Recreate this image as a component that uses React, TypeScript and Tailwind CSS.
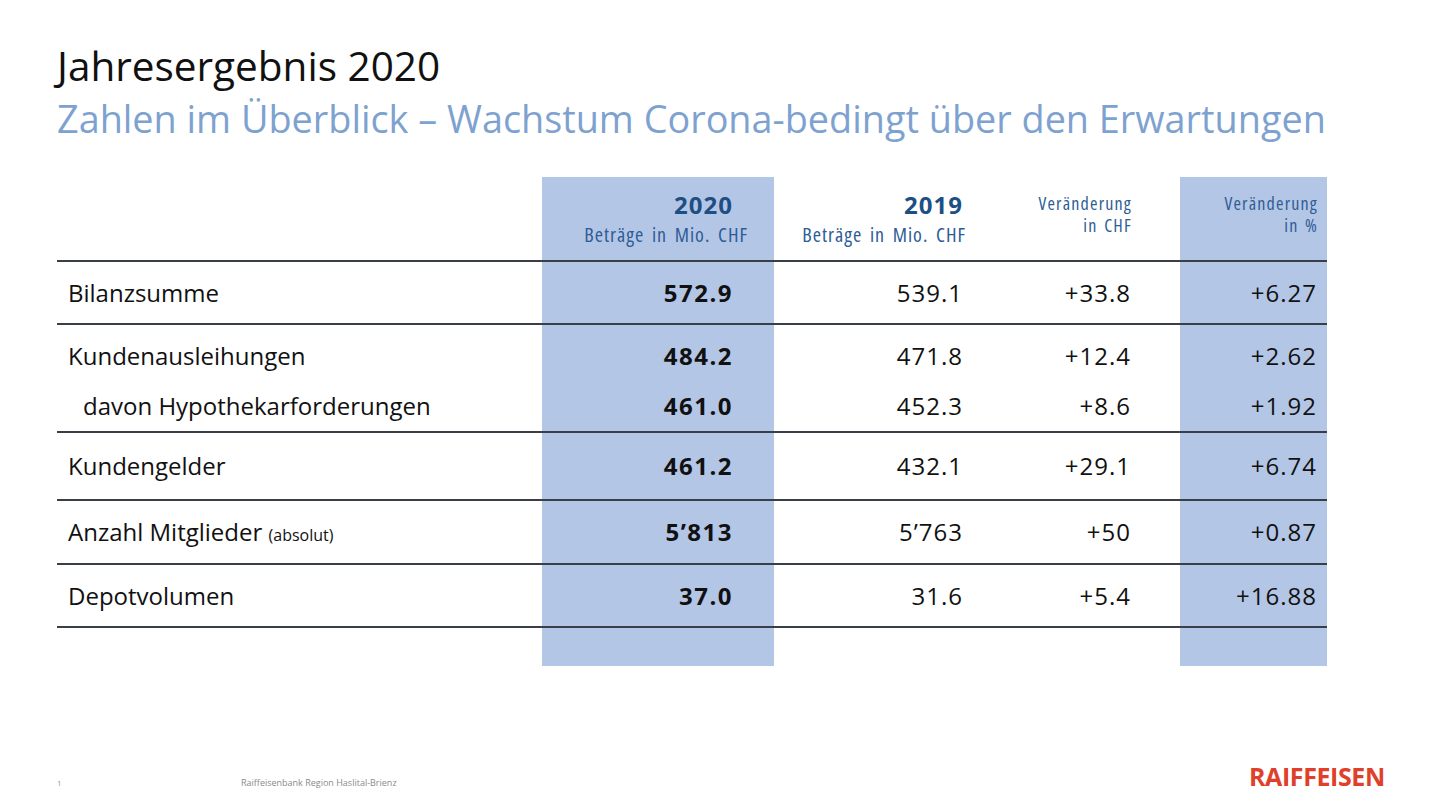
import React from "react";

const sans = { fontFamily: '"Open Sans", "Noto Sans", sans-serif' };

type Row = { label: React.ReactNode; a: string; b: string; c: string; d: string };

function Cells({ r, cls }: { r: Row; cls: string }) {
  return (
    <>
      <div className={`flex items-center pl-[11px] text-[24px] text-[#111] ${cls}`}>{r.label}</div>
      <div className={`flex items-center justify-end pr-[41px] bg-[#b4c6e6] text-[24px] font-bold tracking-[1.5px] text-[#111] ${cls}`}>{r.a}</div>
      <div className={`flex items-center justify-end pr-[17px] text-[24px] tracking-[1px] text-[#111] ${cls}`}>{r.b}</div>
      <div className={`flex items-center justify-end pr-[49px] text-[24px] tracking-[1px] text-[#111] ${cls}`}>{r.c}</div>
      <div className={`flex items-center justify-end pr-[10px] bg-[#b4c6e6] text-[24px] tracking-[1px] text-[#111] ${cls}`}>{r.d}</div>
    </>
  );
}

export default function App() {
  const line = "border-b-2 border-[#3a3f47]";
  const sub = "font-stretch-condensed text-[20px] leading-[28px] tracking-[1px] [word-spacing:3px] text-[#2d5d95]";
  const chg = "font-stretch-condensed text-[18px] leading-[22px] tracking-[1.2px] [word-spacing:2px] text-[#2d5d95]";
  return (
    <div className="w-[1440px] h-[810px] bg-white relative overflow-hidden" style={sans}>
      <div className="pl-[57px] pt-[42px] h-[177px]">
        <div className="text-[40.5px] leading-[48px] text-[#111]">Jahresergebnis 2020</div>
        <div className="mt-[6px] text-[37.8px] leading-[46px] text-[#7ea2d0]">
          Zahlen im Überblick – Wachstum Corona-bedingt über den Erwartungen
        </div>
      </div>

      <div className="ml-[57px] grid grid-cols-[485px_232px_206px_200px_147px] w-[1270px]">
        {/* header */}
        <div className={`h-[85px] ${line}`}></div>
        <div className={`h-[85px] bg-[#b4c6e6] pt-[11px] text-right ${line}`}>
          <div className="pr-[41px] text-[24px] leading-[33px] font-bold tracking-[1px] text-[#1d4f84]">2020</div>
          <div className={`pr-[26px] ${sub}`}>Beträge in Mio. CHF</div>
        </div>
        <div className={`h-[85px] pt-[11px] text-right ${line}`}>
          <div className="pr-[17px] text-[24px] leading-[33px] font-bold tracking-[1px] text-[#1d4f84]">2019</div>
          <div className={`pr-[14px] ${sub}`}>Beträge in Mio. CHF</div>
        </div>
        <div className={`h-[85px] pt-[15px] text-right pr-[48px] ${line}`}>
          <div className={chg}>Veränderung</div>
          <div className={chg}>in CHF</div>
        </div>
        <div className={`h-[85px] bg-[#b4c6e6] pt-[15px] text-right pr-[9px] ${line}`}>
          <div className={chg}>Veränderung</div>
          <div className={chg}>in %</div>
        </div>

        <Cells r={{ label: "Bilanzsumme", a: "572.9", b: "539.1", c: "+33.8", d: "+6.27" }} cls={`h-[63px] ${line}`} />

        {/* combined row */}
        <div className={`h-[108px] pt-[6px] pl-[11px] text-[24px] text-[#111] ${line}`}>
          <div className="h-[50px] flex items-center">Kundenausleihungen</div>
          <div className="h-[50px] flex items-center pl-[15px]">davon Hypothekarforderungen</div>
        </div>
        <div className={`h-[108px] pt-[6px] pr-[41px] bg-[#b4c6e6] text-right text-[24px] font-bold tracking-[1.5px] text-[#111] ${line}`}>
          <div className="h-[50px] flex items-center justify-end">484.2</div>
          <div className="h-[50px] flex items-center justify-end">461.0</div>
        </div>
        <div className={`h-[108px] pt-[6px] pr-[17px] text-[24px] tracking-[1px] text-[#111] ${line}`}>
          <div className="h-[50px] flex items-center justify-end">471.8</div>
          <div className="h-[50px] flex items-center justify-end">452.3</div>
        </div>
        <div className={`h-[108px] pt-[6px] pr-[49px] text-[24px] tracking-[1px] text-[#111] ${line}`}>
          <div className="h-[50px] flex items-center justify-end">+12.4</div>
          <div className="h-[50px] flex items-center justify-end">+8.6</div>
        </div>
        <div className={`h-[108px] pt-[6px] pr-[10px] bg-[#b4c6e6] text-[24px] tracking-[1px] text-[#111] ${line}`}>
          <div className="h-[50px] flex items-center justify-end">+2.62</div>
          <div className="h-[50px] flex items-center justify-end">+1.92</div>
        </div>

        <Cells r={{ label: "Kundengelder", a: "461.2", b: "432.1", c: "+29.1", d: "+6.74" }} cls={`h-[68px] ${line}`} />
        <Cells
          r={{
            label: (
              <span>
                Anzahl Mitglieder <span className="text-[16px]">(absolut)</span>
              </span>
            ),
            a: "5’813",
            b: "5’763",
            c: "+50",
            d: "+0.87",
          }}
          cls={`h-[64px] ${line}`}
        />
        <Cells r={{ label: "Depotvolumen", a: "37.0", b: "31.6", c: "+5.4", d: "+16.88" }} cls={`h-[63px] ${line}`} />

        <div className="h-[38px]"></div>
        <div className="h-[38px] bg-[#b4c6e6]"></div>
        <div className="h-[38px]"></div>
        <div className="h-[38px]"></div>
        <div className="h-[38px] bg-[#b4c6e6]"></div>
      </div>

      <div className="absolute left-[57px] top-[777px] text-[8px] text-[#9a9a9a]">1</div>
      <div className="absolute left-[241px] top-[776px] text-[9px] text-[#8a8a8a]">Raiffeisenbank Region Haslital-Brienz</div>
      <div className="absolute left-[1249px] top-[759px] text-[25px] font-bold tracking-[-0.4px] text-[#e0402a] leading-[34px]">
        RAIFFEISEN
      </div>
    </div>
  );
}
